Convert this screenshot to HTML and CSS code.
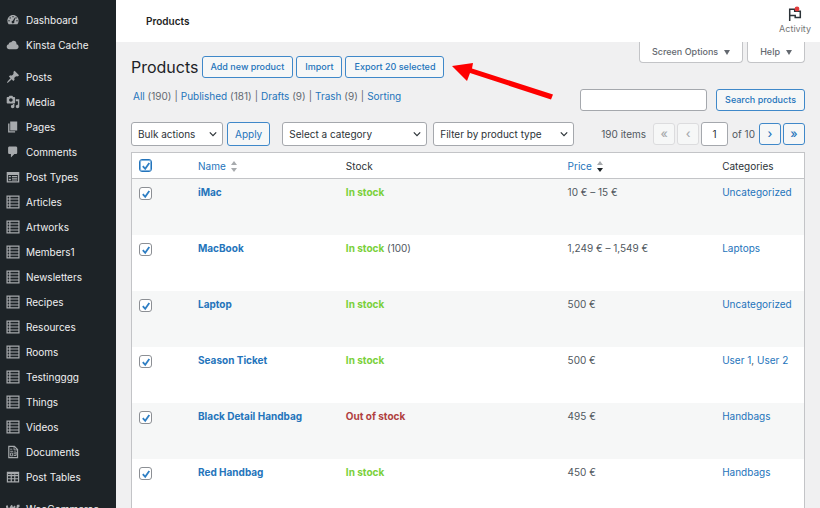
FILE: index.html
```html
<!DOCTYPE html>
<html lang="en">
<head>
<meta charset="utf-8">
<title>Products</title>
<meta name="viewport" content="width=device-width, initial-scale=1">
<link rel="stylesheet" href="styles.css">
</head>
<body>
<svg class="sprite" aria-hidden="true">
  <symbol id="i-dashboard" viewBox="0 0 20 20"><path fill="currentColor" d="M3.76 16h12.48c1.1-1.37 1.76-3.11 1.76-5 0-4.42-3.58-8-8-8s-8 3.58-8 8c0 1.89.66 3.63 1.76 5z"/><g fill="#1d2327"><circle cx="10" cy="5.2" r="1"/><circle cx="6" cy="7" r="1"/><circle cx="14.4" cy="7" r="1"/><circle cx="4.3" cy="11" r="1"/><circle cx="15.7" cy="11" r="1"/><path d="M12.8 6.3l.7.4-1.7 5.4a2 2 0 1 1-2.1-1.2z"/></g></symbol>
  <symbol id="i-cloud" viewBox="0 0 20 20"><path fill="currentColor" d="M14.9 9c1.8.2 3.1 1.7 3.1 3.5 0 1.9-1.6 3.5-3.5 3.5h-10C2.6 16 1 14.4 1 12.5 1 10.7 2.3 9.3 4.1 9 4 8.9 4 8.7 4 8.5 4 7.1 5.1 6 6.5 6c.3 0 .7.1.9.2C8.1 4.9 9.4 4 11 4c2.2 0 4 1.8 4 4 0 .4-.1.7-.1 1z"/></symbol>
  <symbol id="i-pin" viewBox="0 0 20 20"><path fill="currentColor" d="M10.44 3.02l1.82-1.82 6.36 6.35-1.83 1.82c-1.05-.68-2.48-.57-3.41.36l-.75.75c-.92.93-1.04 2.35-.35 3.41l-1.83 1.82-2.41-2.41-2.8 2.79c-.42.42-3.38 2.71-3.8 2.29s1.86-3.39 2.28-3.81l2.79-2.79L4.1 9.36l1.83-1.82c1.05.69 2.48.57 3.4-.36l.75-.75c.93-.92 1.05-2.35.36-3.41z"/></symbol>
  <symbol id="i-media" viewBox="0 0 20 20"><path fill="currentColor" fill-rule="evenodd" d="M13 11V4c0-.55-.45-1-1-1h-1.67L9 1H5L3.67 3H2c-.55 0-1 .45-1 1v7c0 .55.45 1 1 1h10c.55 0 1-.45 1-1zM7 4.5c1.38 0 2.5 1.12 2.5 2.5S8.38 9.5 7 9.5 4.5 8.38 4.5 7 5.62 4.5 7 4.5zM14 6h5v10.5c0 1.38-1.12 2.5-2.5 2.5S14 17.88 14 16.5s1.12-2.5 2.5-2.5c.17 0 .34.02.5.05V9h-3V6zm-4 8.05V13h2v3.5c0 1.38-1.12 2.5-2.5 2.5S7 17.88 7 16.5 8.12 14 9.5 14c.17 0 .34.02.5.05z"/></symbol>
  <symbol id="i-pages" viewBox="0 0 20 20"><path fill="currentColor" d="M6 15V2h10v13H6zm-1 1h8v2H3V5h2v11z"/></symbol>
  <symbol id="i-comment" viewBox="0 0 20 20"><path fill="currentColor" d="M5 2h9c1.1 0 2 .9 2 2v7c0 1.1-.9 2-2 2h-2l-5 5v-5H5c-1.1 0-2-.9-2-2V4c0-1.1.9-2 2-2z"/></symbol>
  <symbol id="i-types" viewBox="0 0 20 20"><path fill="currentColor" fill-rule="evenodd" d="M1 3h18v15H1zM3 7v9h14V7z"/><path fill="currentColor" d="M4 8.5h3v2H4zM4 12.5h3v2H4zM8.500 8.500h7.500v1.500h-7.500zM8.500 11h7.500v1.500h-7.500zM8.500 13.500h7.500v1.500h-7.500z"/></symbol>
  <symbol id="i-list" viewBox="0 0 20 20"><path fill="none" stroke="currentColor" stroke-width="1.700" d="M1.500 1.500h17v17h-17zM1.500 5.750h17M1.500 10h17M1.500 14.250h17M5.500 1.500v17"/></symbol>
  <symbol id="i-doc" viewBox="0 0 20 20"><path fill="none" stroke="currentColor" stroke-width="1.700" d="M4 2h8l4.500 4.500V18H4z"/><path fill="none" stroke="currentColor" stroke-width="1.300" d="M11.500 2v5h5M6 6h3M6 9h4M6.500 11.500h3v4h-3zM11 10h3.500v5H11M11 12.500h3"/></symbol>
  <symbol id="i-table" viewBox="0 0 20 20"><path fill="none" stroke="currentColor" stroke-width="1.700" d="M2 3.500h16v13.500H2zM2 8h16M2 12.500h16M7.500 6v11M12.500 6v11"/><path fill="currentColor" d="M2 3h16v3H2z"/></symbol>
  <symbol id="i-woo" viewBox="0 0 20 20"><path fill="none" stroke="currentColor" stroke-width="3" stroke-linejoin="round" d="M1 5l2.500 9L8 6l1.500 8c.5-3.500 1.500-6 3.500-8M13 14c2.500-2 3.500-5 3.800-8.500h2.500"/></symbol>
  <symbol id="i-down" viewBox="0 0 10 10"><path fill="none" stroke="currentColor" stroke-width="1.500" d="M1 3l4 4 4-4"/></symbol>
</svg>

<div class="shell">
  <nav class="sidebar" aria-label="Main menu">
    <ul>
      <li><a href="#"><svg><use href="#i-dashboard"/></svg>Dashboard</a></li>
      <li><a href="#"><svg><use href="#i-cloud"/></svg>Kinsta Cache</a></li>
    </ul>
    <ul>
      <li><a href="#"><svg><use href="#i-pin"/></svg>Posts</a></li>
      <li><a href="#"><svg><use href="#i-media"/></svg>Media</a></li>
      <li><a href="#"><svg><use href="#i-pages"/></svg>Pages</a></li>
      <li><a href="#"><svg><use href="#i-comment"/></svg>Comments</a></li>
      <li><a href="#"><svg><use href="#i-types"/></svg>Post Types</a></li>
      <li><a href="#"><svg><use href="#i-list"/></svg>Articles</a></li>
      <li><a href="#"><svg><use href="#i-list"/></svg>Artworks</a></li>
      <li><a href="#"><svg><use href="#i-list"/></svg>Members1</a></li>
      <li><a href="#"><svg><use href="#i-list"/></svg>Newsletters</a></li>
      <li><a href="#"><svg><use href="#i-list"/></svg>Recipes</a></li>
      <li><a href="#"><svg><use href="#i-list"/></svg>Resources</a></li>
      <li><a href="#"><svg><use href="#i-list"/></svg>Rooms</a></li>
      <li><a href="#"><svg><use href="#i-list"/></svg>Testingggg</a></li>
      <li><a href="#"><svg><use href="#i-list"/></svg>Things</a></li>
      <li><a href="#"><svg><use href="#i-list"/></svg>Videos</a></li>
      <li><a href="#"><svg><use href="#i-doc"/></svg>Documents</a></li>
      <li><a href="#"><svg><use href="#i-table"/></svg>Post Tables</a></li>
    </ul>
    <ul>
      <li><a href="#"><svg><use href="#i-woo"/></svg>WooCommerce</a></li>
    </ul>
  </nav>

  <div class="page">
    <header class="topbar">
      <strong>Products</strong>
      <button class="activity" type="button">
        <svg viewBox="0 0 16 16" aria-hidden="true"><path fill="none" stroke="#2c3338" stroke-width="1.500" d="M2.700 15V3.200h5v2h5.600v6.300H8.200V9.600H2.700"/><circle cx="10" cy="3" r="2.400" fill="#e23b3b"/></svg>
        Activity
      </button>
    </header>

    <main class="content">
      <svg class="pointer" viewBox="0 0 102 40" aria-hidden="true"><path fill="#fe0000" d="M0 4l21-3-1 5.500 81 26-2 5-81-26.500-3 8z"/></svg>

      <div class="heading">
        <div class="title">
          <h1>Products</h1>
          <a class="btn" href="#">Add new product</a>
          <a class="btn" href="#">Import</a>
          <a class="btn" href="#">Export 20 selected</a>
        </div>
        <div class="tabs">
          <button type="button">Screen Options <span class="tri"></span></button>
          <button type="button">Help <span class="tri"></span></button>
        </div>
      </div>

      <div class="subhead">
        <ul class="views">
          <li><a href="#">All</a> (190)</li>
          <li><a href="#">Published</a> (181)</li>
          <li><a href="#">Drafts</a> (9)</li>
          <li><a href="#">Trash</a> (9)</li>
          <li><a href="#">Sorting</a></li>
        </ul>
        <form class="search">
          <input type="search" aria-label="Search products">
          <button class="btn" type="button">Search products</button>
        </form>
      </div>

      <div class="filters">
        <span class="pick bulk"><select aria-label="Bulk actions"><option>Bulk actions</option></select><svg><use href="#i-down"/></svg></span>
        <button class="btn apply" type="button">Apply</button>
        <span class="pick category"><select aria-label="Category"><option>Select a category</option></select><svg><use href="#i-down"/></svg></span>
        <span class="pick type"><select aria-label="Product type"><option>Filter by product type</option></select><svg><use href="#i-down"/></svg></span>
        <div class="pager">
          <span class="count">190 items</span>
          <button class="btn step" type="button" disabled aria-label="First page">«</button>
          <button class="btn step" type="button" disabled aria-label="Previous page">‹</button>
          <input type="text" value="1" aria-label="Current page">
          <span class="total">of 10</span>
          <button class="btn step" type="button" aria-label="Next page">›</button>
          <button class="btn step" type="button" aria-label="Last page">»</button>
        </div>
      </div>

      <table>
        <colgroup><col class="c-check"><col class="c-thumb"><col class="c-name"><col class="c-stock"><col class="c-price"><col></colgroup>
        <thead>
          <tr>
            <td><input type="checkbox" class="focused" checked aria-label="Select all"></td>
            <td></td>
            <th scope="col"><a href="#">Name <svg class="sort" viewBox="0 0 6 11"><path d="M3 0l3 4H0z"/><path d="M3 11l3-4H0z"/></svg></a></th>
            <th scope="col">Stock</th>
            <th scope="col"><a href="#">Price <svg class="sort desc" viewBox="0 0 6 11"><path d="M3 0l3 4H0z"/><path d="M3 11l3-4H0z"/></svg></a></th>
            <th scope="col">Categories</th>
          </tr>
        </thead>
        <tbody>
          <tr><td><input type="checkbox" checked aria-label="Select iMac"></td><td></td><td><a class="name" href="#">iMac</a></td><td><b class="in">In stock</b></td><td>10 € – 15 €</td><td><a href="#">Uncategorized</a></td></tr>
          <tr><td><input type="checkbox" checked aria-label="Select MacBook"></td><td></td><td><a class="name" href="#">MacBook</a></td><td><b class="in">In stock</b> (100)</td><td>1,249 € – 1,549 €</td><td><a href="#">Laptops</a></td></tr>
          <tr><td><input type="checkbox" checked aria-label="Select Laptop"></td><td></td><td><a class="name" href="#">Laptop</a></td><td><b class="in">In stock</b></td><td>500 €</td><td><a href="#">Uncategorized</a></td></tr>
          <tr><td><input type="checkbox" checked aria-label="Select Season Ticket"></td><td></td><td><a class="name" href="#">Season Ticket</a></td><td><b class="in">In stock</b></td><td>500 €</td><td><a href="#">User 1</a>, <a href="#">User 2</a></td></tr>
          <tr><td><input type="checkbox" checked aria-label="Select Black Detail Handbag"></td><td></td><td><a class="name" href="#">Black Detail Handbag</a></td><td><b class="out">Out of stock</b></td><td>495 €</td><td><a href="#">Handbags</a></td></tr>
          <tr><td><input type="checkbox" checked aria-label="Select Red Handbag"></td><td></td><td><a class="name" href="#">Red Handbag</a></td><td><b class="in">In stock</b></td><td>450 €</td><td><a href="#">Handbags</a></td></tr>
        </tbody>
      </table>
    </main>
  </div>
</div>
</body>
</html>
```
FILE: styles.css
```css
* { box-sizing: border-box; }

body {
  margin: 0;
  background: #f0f0f1;
  color: #50575e;
  font: 10px/14px Inter, "Liberation Sans", sans-serif;
}

a { color: #2474bb; text-decoration: none; }
ul { list-style: none; margin: 0; padding: 0; }
button, input, select { font: inherit; margin: 0; }
.sprite { display: none; }

.shell { display: flex; height: 100vh; overflow: hidden; }

/* Sidebar */
.sidebar {
  flex: none;
  width: 116px;
  padding-top: 7px;
  background: #1d2327;
  overflow: hidden;
}
.sidebar ul { margin-bottom: 7px; }
.sidebar a {
  display: flex;
  align-items: center;
  gap: 6px;
  height: 25px;
  padding-left: 6px;
  color: #f0f0f1;
  white-space: nowrap;
}
.sidebar svg { flex: none; width: 14px; height: 14px; color: #a7aaad; }

.page { flex: 1; min-width: 0; }

/* Top bar */
.topbar {
  display: flex;
  align-items: center;
  justify-content: space-between;
  height: 42px;
  padding: 0 9px 0 30px;
  background: #fff;
  color: #1e1e1e;
}
.topbar strong { font-weight: 600; }
.activity {
  display: flex;
  flex-direction: column;
  align-items: center;
  padding: 0;
  border: 0;
  background: none;
  color: #757575;
  font-size: 9px;
}
.activity svg { width: 16px; height: 16px; }

.content { position: relative; padding: 0 15px; }

.pointer {
  position: absolute;
  left: 336px;
  top: 20px;
  width: 102px;
  height: 40px;
}

/* Heading */
.heading { display: flex; justify-content: space-between; align-items: flex-start; }
.title { display: flex; align-items: center; gap: 3px; padding-top: 14px; }
h1 { margin: 0; color: #1d2327; font-size: 16px; line-height: 22px; font-weight: 400; }
.btn {
  height: 22px;
  padding: 0 8px;
  border: 1px solid #3f88c9;
  border-radius: 3px;
  background: #f6f7f7;
  color: #2474bb;
  font-size: 9px;
  font-weight: 500;
  line-height: 20px;
  white-space: nowrap;
}
.tabs { display: flex; gap: 4px; }
.tabs button {
  display: flex;
  align-items: center;
  gap: 6px;
  height: 21px;
  padding: 0 12px;
  border: 1px solid #c3c4c7;
  border-top: 0;
  border-radius: 0 0 4px 4px;
  background: #fff;
  color: #646970;
  font-size: 9px;
  font-weight: 500;
  white-space: nowrap;
}
.tri { border: 3px solid transparent; border-top: 5px solid #646970; border-bottom: 0; }

/* Views and search */
.subhead { display: flex; justify-content: space-between; margin-top: 11px; }
.views { display: flex; padding-left: 2px; color: #646970; }
.views li + li::before { content: "|"; margin: 0 3px; }
.search { display: flex; gap: 9px; }
.search input {
  width: 127px;
  height: 22px;
  border: 1px solid #a5a8ad;
  border-radius: 3px;
  background: #fff;
}

/* Filters */
.filters { display: flex; align-items: center; margin-top: 11px; }
.pick { position: relative; color: #2c3338; }
.pick select {
  appearance: none;
  width: 100%;
  height: 24px;
  padding: 0 6px;
  border: 1px solid #a5a8ad;
  border-radius: 3px;
  background: #fff;
  color: inherit;
  display: block;
}
.pick svg { position: absolute; right: 6px; top: 8px; width: 8px; height: 8px; pointer-events: none; }
.bulk { width: 92px; }
.category { width: 145px; margin: 0 6px 0 12px; }
.type { width: 141px; }
.filters .apply { height: 24px; padding: 0 7px; margin-left: 4px; font-size: 10px; font-weight: 400; }
.pager { display: flex; align-items: center; gap: 2px; margin-left: auto; }
.count { margin-right: 5px; }
.total { margin: 0 2px; }
.pager input {
  width: 27px;
  height: 24px;
  padding: 0;
  border: 1px solid #a5a8ad;
  border-radius: 3px;
  color: #2c3338;
  text-align: center;
}
.pager .step { width: 22px; padding: 0; font-size: 12px; }
.step:disabled { border-color: #dcdcde; color: #a7aaad; }

/* Table */
table {
  width: 100%;
  margin-top: 6px;
  border: 1px solid #c3c4c7;
  border-spacing: 0;
  background: #fff;
  table-layout: fixed;
}
.c-check { width: 30px; }
.c-thumb { width: 29px; }
.c-name { width: 22%; }
.c-stock { width: 33%; }
.c-price { width: 23%; }
th, td { padding: 0 0 0 7px; text-align: left; }
thead th, thead td { height: 26px; border-bottom: 1px solid #c3c4c7; color: #2c3338; font-weight: 400; }
tbody td { height: 56px; padding-top: 6px; vertical-align: top; }
tbody tr:nth-child(odd) { background: #f6f7f7; }
.name { font-weight: 700; }
.in { color: #7ad03a; font-weight: 700; }
.out { color: #b04040; font-weight: 700; }
.sort { width: 6px; height: 11px; margin-left: 2px; vertical-align: middle; fill: #a7aaad; }
.desc path:last-child { fill: #1d2327; }

input[type="checkbox"] {
  appearance: none;
  display: block;
  width: 13px;
  height: 13px;
  border: 1px solid #8c8f94;
  border-radius: 3px;
  background: #fff;
}
tbody input[type="checkbox"] { margin-top: 2px; }
input[type="checkbox"]:checked {
  background: #fff url("data:image/svg+xml,%3Csvg xmlns='http://www.w3.org/2000/svg' viewBox='0 0 10 10'%3E%3Cpath d='M1.800 5.200l2.400 2.600L8.300 2' fill='none' stroke='%232f7fc4' stroke-width='1.800'/%3E%3C/svg%3E") center / 10px no-repeat;
}
input[type="checkbox"].focused { border-color: #2474bb; box-shadow: inset 0 0 0 1px #7fb2de; }
```
